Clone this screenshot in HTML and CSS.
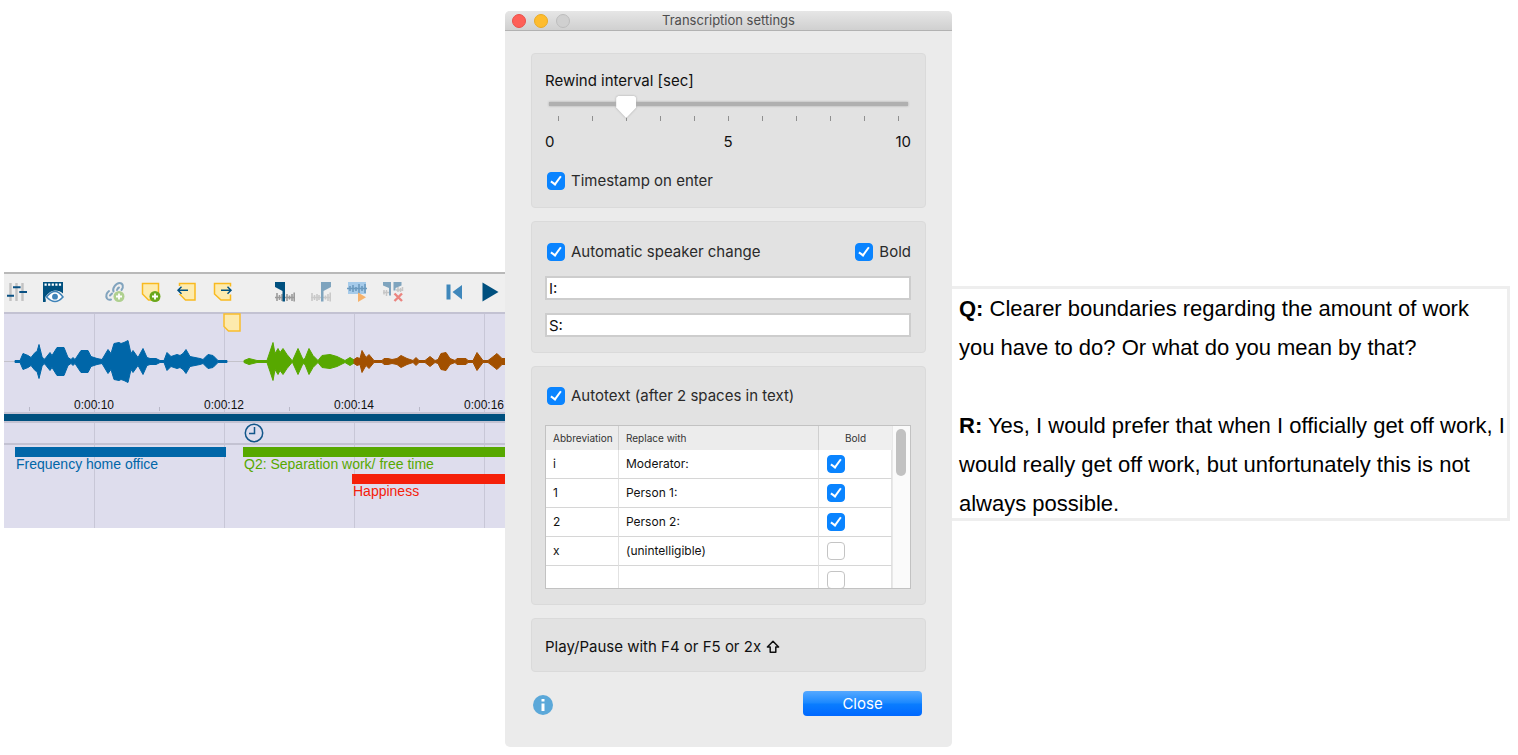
FILE: index.html
```html
<!DOCTYPE html>
<html lang="en">
<head>
  <meta charset="utf-8">
  <title>Transcription settings</title>
  <link rel="stylesheet" href="styles.css">
</head>
<body>
<main class="page">

  <!-- MEDIA PLAYER -->
  <section class="player">
    <div class="toolbar">
      <div class="tool-group">
        <button class="tool" aria-label="Levels"><svg viewBox="0 0 20 20"><path d="M3.5 1v18M9.5 1v18M15.5 1v18" stroke="#c3c3c3" stroke-width="2.4"/><path d="M0 13.7h7M6 5.3h7.6M12.3 10h7.7" stroke="#0a5184" stroke-width="2"/></svg></button>
        <button class="tool" aria-label="Show video"><svg viewBox="0 0 20 20"><path d="M0 0h20v20H0z" fill="#00507f"/><path d="M1.5 2.6h17.4" stroke="#fff" stroke-width="2.4" stroke-dasharray="2.2 1.4"/><path d="M2.6 20C3.500 17 1.500 16 2.600 14.500Q7 8.500 12 8.500Q17 8.500 20 11.500V20z" fill="#efefef"/><path d="M3.500 15Q8 9.500 12 9.500T20 15Q16 19.500 12 19.500T3.500 15z" fill="#fff" stroke="#3f83b8" stroke-width="1.500"/><circle cx="12" cy="14.700" r="2.900" fill="#3f83b8"/></svg></button>
      </div>
      <div class="tool-group">
        <button class="tool" aria-label="Add link"><svg viewBox="0 0 20 20"><g fill="none" stroke="#82a4be" stroke-width="2" stroke-linecap="round"><path d="M8.500 9.500C7 6.500 11 1 14.500 1S19 5 16.500 8"/><path d="M12 8Q12.700 6 14 5.500M4 9C1.500 11 .500 13.500 2 16.500Q3.500 18.500 6 17.500M7 11.500l-2 2"/></g><circle cx="14" cy="14.500" r="5.500" fill="#afd08f"/><path d="M14 11.500v6M11 14.500h6" stroke="#fff" stroke-width="1.800"/></svg></button>
        <button class="tool" aria-label="Add memo"><svg viewBox="0 0 20 20"><path d="M1.500 1.500h16V18H7.500l-6-6z" fill="#fdebaf" stroke="#f9ba20" stroke-width="1.500"/><circle cx="14" cy="14.500" r="5.500" fill="#6aa71b"/><path d="M14 11.500v6M11 14.500h6" stroke="#fff" stroke-width="1.800"/></svg></button>
        <button class="tool" aria-label="Previous memo"><svg viewBox="0 0 20 20"><path d="M2.500 1.500h15.500V18H8.500l-6-6z" fill="#fdebaf" stroke="#f9ba20" stroke-width="1.500"/><path d="M0 4h4v8H0z" fill="#efefef"/><path d="M11 8.300H1M4.500 4.800L1 8.300l3.500 3.500" fill="none" stroke="#00507f" stroke-width="1.500"/></svg></button>
        <button class="tool" aria-label="Next memo"><svg viewBox="0 0 20 20"><path d="M1.500 1.500h16V18H8l-6.500-6z" fill="#fdebaf" stroke="#f9ba20" stroke-width="1.500"/><path d="M16 4.500h3v8h-3z" fill="#efefef"/><path d="M8 8.300h10M14.500 4.800L18 8.300l-3.500 3.500" fill="none" stroke="#00507f" stroke-width="1.500"/></svg></button>
      </div>
      <div class="tool-group">
        <button class="tool" aria-label="Clip start"><svg viewBox="0 0 20 20"><path d="M0 15.500h20M2 11v8M4.500 13v5M7 12v7M12 12v7M14.500 13.500v4M17 12v7M19.200 10.500v9" stroke="#9b9b9b" stroke-width="1.600"/><path d="M0 0h10v19.500H7.500V9L0 5z" fill="#00507f"/></svg></button>
        <button class="tool" aria-label="Clip end"><svg viewBox="0 0 20 20"><path d="M0 15.500h20M1 11v8M3.500 13v5M6 12v7M8 13v5M14.500 13.500v4M17 12v7M19.200 10.500v9" stroke="#c9c9c9" stroke-width="1.600"/><path d="M20 0H10v19.500h2.500V9L20 5z" fill="#7fa4be"/></svg></button>
        <button class="tool" aria-label="Play clip"><svg viewBox="0 0 20 20"><path d="M1 0h18v12H1z" fill="#a6cbea"/><path d="M0 6.500h20M3 4v5M6 3v7M9 5v4M12 2v9M15 4v5M18 2v9" stroke="#6b9abf" stroke-width="1.600"/><path d="M11 10.500l8 4.800-8 4.700z" fill="#f6b26b"/></svg></button>
        <button class="tool" aria-label="Delete clip"><svg viewBox="0 0 20 20"><path d="M1 8v4.500M3.500 8v6M0 10.500h7M13 8h7M15 5v5M17.500 6v4M19.500 5v4" stroke="#c6c6c6" stroke-width="1.500"/><path d="M0 0h8v13.500H6V6L0 3.500zM18.500 0H10.500v8.500h2V6l6-2.500z" fill="#7fa4be"/><path d="M11.500 11.500l7.500 7.500M19 11.500L11.500 19" stroke="#eb8580" stroke-width="2.400"/></svg></button>
      </div>
      <div class="tool-group">
        <button class="tool" aria-label="To start"><svg viewBox="0 0 20 20"><path d="M1.500 2.500h4v15h-4zM17 3v14.500L7.500 10z" fill="#3f87bb"/></svg></button>
        <button class="tool" aria-label="Play"><svg viewBox="0 0 20 20"><path d="M1.500 .500V19.500L17.500 10z" fill="#00507f"/></svg></button>
      </div>
    </div>

    <div class="timeline">
      <div class="wave">
        <svg id="waveView" class="wave-view" width="501" height="84" viewBox="4 314 501 84"></svg>
        <svg class="memo-pin" width="18" height="19" viewBox="0 0 18 19"><path d="M1 1h16v17H5.500L1 13.500z" fill="#fdeaad" stroke="#f9bd2c" stroke-width="1.500"/></svg>
        <div class="times">
          <span>0:00:10</span><span>0:00:12</span><span>0:00:14</span><span>0:00:16</span>
        </div>
      </div>
      <div class="divider"></div>
      <div class="stamps">
        <svg class="stamp" width="20" height="20" viewBox="0 0 20 20"><circle cx="10" cy="10" r="8.700" fill="none" stroke="#12568a" stroke-width="1.500"/><path d="M10.500 4v6.500H5" fill="none" stroke="#12568a" stroke-width="1.500"/></svg>
      </div>
      <div class="codings">
        <div class="coding coding-office">Frequency home office</div>
        <div class="coding coding-time">Q2: Separation work/ free time</div>
        <div class="coding coding-happy">Happiness</div>
      </div>
    </div>
  </section>

  <!-- SETTINGS DIALOG -->
  <section class="dialog">
    <header class="titlebar">
      <div class="lights"><i class="light red"></i><i class="light yellow"></i><i class="light"></i></div>
      <h1 class="title">Transcription settings</h1>
    </header>

    <div class="dialog-body">
      <div class="panel panel-rewind">
        <label class="caption" for="rewind">Rewind interval [sec]</label>
        <input class="slider" id="rewind" type="range" min="0" max="10" value="2">
        <div class="ticks"><i></i><i></i><i></i><i></i><i></i><i></i><i></i><i></i><i></i><i></i><i></i></div>
        <div class="scale"><span>0</span><span>5</span><span>10</span></div>
        <label class="check"><input type="checkbox" checked>Timestamp on enter</label>
      </div>

      <div class="panel panel-speaker">
        <div class="check-row">
          <label class="check"><input type="checkbox" checked>Automatic speaker change</label>
          <label class="check"><input type="checkbox" checked>Bold</label>
        </div>
        <input class="field" type="text" value="I:" aria-label="First speaker">
        <input class="field" type="text" value="S:" aria-label="Second speaker">
      </div>

      <div class="panel panel-autotext">
        <label class="check"><input type="checkbox" checked>Autotext (after 2 spaces in text)</label>
        <div class="table-box">
          <table class="autotext">
            <thead>
              <tr><th class="col-abbr">Abbreviation</th><th>Replace with</th><th class="col-bold">Bold</th></tr>
            </thead>
            <tbody>
              <tr><td>i</td><td>Moderator:</td><td><input type="checkbox" aria-label="Bold" checked></td></tr>
              <tr><td>1</td><td>Person 1:</td><td><input type="checkbox" aria-label="Bold" checked></td></tr>
              <tr><td>2</td><td>Person 2:</td><td><input type="checkbox" aria-label="Bold" checked></td></tr>
              <tr><td>x</td><td>(unintelligible)</td><td><input type="checkbox" aria-label="Bold"></td></tr>
              <tr><td></td><td></td><td><input type="checkbox" aria-label="Bold"></td></tr>
            </tbody>
          </table>
          <div class="scrollbar"><div class="scroll-thumb"></div></div>
        </div>
      </div>

      <div class="panel panel-keys">
        <span>Play/Pause with F4 or F5 or 2x</span>
        <svg width="14" height="14" viewBox="0 0 14 14"><path d="M7 1.200L12.600 7H9.800v5.200H4.200V7H1.400z" fill="none" stroke="#111" stroke-width="1.500" stroke-linejoin="round"/></svg>
      </div>

      <footer class="actions">
        <button class="info" aria-label="Help"><svg width="20" height="20" viewBox="0 0 20 20"><circle cx="10" cy="10" r="10" fill="#5ba8d9"/><path d="M8.500 4h3v2.600h-3zM8.500 8.500h3V16h-3z" fill="#fff"/></svg></button>
        <button class="close">Close</button>
      </footer>
    </div>
  </section>

  <!-- TRANSCRIPT -->
  <section class="transcript">
    <p><b>Q:</b> Clearer boundaries regarding the amount of work you have to do? Or what do you mean by that?</p>
    <p><b>R:</b> Yes, I would prefer that when I officially get off work, I would really get off work, but unfortunately this is not always possible.</p>
  </section>
</main>

<script>
(function(){
  // [x, amplitude] pairs, mirrored around the middle line
  const mid=361.5;
  const segments=[
    {color:'#0066a8',pts:[[15,1],[20,1],[23,8],[28,6],[31,4],[35,9],[37,10],[39,17],[42,5],[44,2],[46,4],[50,9],[52,6],[57,14],[64,14],[68,4],[71,2],[73,4],[75,2],[81,11],[88,11],[91,5],[97,3],[102,2],[108,12],[111,8],[114,18],[119,19],[121,18],[124,19],[128,21],[131,8],[133,11],[138,4],[143,13],[147,4],[150,3],[156,3],[160,1],[164,1],[167,9],[171,5],[177,7],[180,6],[183,8],[186,12],[190,5],[200,3],[203,2],[208,7],[213,6],[218,1],[227,1]]},
    {color:'#57a800',pts:[[244,1],[249,3],[257,1],[267,1],[270,10],[273,19],[275,8],[278,13],[280,9],[283,13],[287,7],[292,1],[293,2],[298,13],[303,2],[305,3],[309,13],[313,6],[318,1],[322,6],[330,7],[337,5],[345,1],[350,4],[355,1]]},
    {color:'#a25000',pts:[[354,2],[357,4],[360,3],[362,11],[366,4],[369,7],[374,1],[382,1],[384,3],[388,3],[392,2],[397,3],[401,6],[407,3],[413,1],[416,4],[419,1],[425,1],[430,5],[435,1],[438,2],[441,8],[446,9],[450,3],[455,1],[457,3],[466,3],[468,1],[473,1],[477,9],[483,1],[488,1],[492,4],[497,8],[502,3],[505,3]]}
  ];
  const top=p=>`${p[0]},${mid-p[1]}`, bottom=p=>`${p[0]},${mid+p[1]}`;
  document.getElementById('waveView').innerHTML=
    `<path d="M4 ${mid}H505" stroke="#c3c2ca"/>`+
    segments.map(s=>`<polygon fill="${s.color}" stroke="${s.color}" stroke-linejoin="round" points="${[...s.pts.map(top),...s.pts.slice().reverse().map(bottom)].join(' ')}"/>`).join('');
})();
</script>
</body>
</html>
```
FILE: styles.css
```css
/* --- Layout & Basics --- */
*{box-sizing:border-box}
body{margin:0;background:#fff;font-family:Inter,"Liberation Sans",sans-serif;font-size:15px;line-height:20px;color:#111}
button,input{font:inherit;margin:0}
button{border:0;padding:0;background:none}
.page{display:grid;grid-template-columns:minmax(0,501fr) 447px minmax(0,558fr);align-items:start;padding:11px 8px 8px 4px}

/* --- Player --- */
.player{margin-top:261px;font-family:"Liberation Sans",Arial,sans-serif;overflow:hidden}
.toolbar{display:flex;gap:42px;height:42px;padding:8px 3px 0;background:#efefef;border-top:2px solid #b9b9b9;border-bottom:2px solid #c3c2d2}
.tool-group{display:flex;gap:16px}
.tool{width:20px;height:20px}
.tool svg{display:block;width:20px;height:20px;overflow:visible}
.timeline{background:#dedded linear-gradient(90deg,#c8c7d7 1px,transparent 1px) 90px 0/130px 100%}
.wave{position:relative;height:98px}
.wave-view{display:block}
.memo-pin{position:absolute;left:219px;top:-1px}
.times{display:flex;padding-left:25px;height:14px;font-size:12px;line-height:14px;background:repeating-linear-gradient(90deg,#b9b8c8 0 1px,transparent 1px 130px) 25px 9px/100% 4px no-repeat}
.times span{flex:0 0 130px;text-align:center}
.divider{height:11px;background:#00507f;border-top:2px solid #c5c4d4;border-bottom:2px solid #c3c2d2}
.stamps{height:22px;padding-left:240px;border-bottom:2px solid #c3c2d2}
.stamp{display:block}
.codings{display:grid;grid-template-columns:11px 211px 17px 109px 1fr;grid-auto-rows:27px;height:83px;padding-top:2px;font-size:14px;line-height:15px;white-space:nowrap}
.coding{border-top:10px solid;padding-left:1px}
.coding-office{grid-area:1/2;color:#0066a8}
.coding-time{grid-area:1/4/2/6;color:#57a800}
.coding-happy{grid-area:2/5;color:#f5200a}

/* --- Dialog --- */
.dialog{background:#ebebeb;border-radius:5px;overflow:hidden}
.titlebar{display:grid;grid-template-columns:1fr auto 1fr;align-items:center;height:20px;padding:0 7px;background:linear-gradient(#e6e6e6,#d0d0d0);border-bottom:1px solid #b2b2b2}
.lights{display:flex;gap:8px}
.light{width:14px;height:14px;border-radius:50%;background:#d0d0d0;border:1px solid #bdbdbd}
.red{background:#fe5f57;border-color:#ea5049}
.yellow{background:#febc2e;border-color:#eaab23}
.title{margin:0;font-size:13px;font-weight:400;line-height:19px;color:#4d4d4d}
.dialog-body{display:flex;flex-direction:column;gap:13px;padding:22px 26px 31px}
.panel{padding:14px 14px 14px 13px;background:#e2e2e2;border:1px solid #dadada;border-radius:4px}

/* --- Checkboxes --- */
.check{display:flex;align-items:center;gap:6px;padding-left:2px;color:#2a2a2a}
input[type=checkbox]{appearance:none;display:block;position:relative;width:18px;height:18px;border:1px solid #c4c4c4;border-radius:4px;background:#fff}
input[type=checkbox]:checked{background:#0a84ff;border-color:#0a84ff}
input[type=checkbox]:checked::before{content:"";position:absolute;left:5px;top:1px;width:4px;height:9px;border:solid #fff;border-width:0 2px 2px 0;transform:rotate(36deg)}

/* --- Rewind --- */
.panel-rewind{height:155px;padding-top:17px}
.caption{display:block}
.slider{appearance:none;display:block;width:361px;height:22px;margin:5px 2px 0 3px;background:linear-gradient(#b0b0b0,#b0b0b0) center 6px/359px 4px no-repeat;filter:drop-shadow(0 0 1px rgba(0,0,0,.25))}
.slider::-webkit-slider-thumb{appearance:none;width:20px;height:22px;background:#fff;clip-path:polygon(10% 0,90% 0,100% 8%,100% 52%,50% 100%,0 52%,0 8%)}
.ticks{display:flex;justify-content:space-between;margin:-2px 12px 0 13px}
.ticks i{width:1px;height:5px;background:#8f8f8f}
.scale{display:grid;grid-template-columns:repeat(3,1fr);margin-top:11px}
.scale span:nth-child(2){text-align:center}
.scale span:nth-child(3){text-align:right}
.panel-rewind .check{margin-top:19px}

/* --- Speaker change --- */
.panel-speaker{display:flex;flex-direction:column;gap:13px;height:132px;padding-top:20px}
.check-row{display:flex;justify-content:space-between;margin-bottom:1px}
.field{width:100%;height:24px;padding:0 2px;border:2px solid #cdcdcd;border-radius:0;background:#fff;color:#111}

/* --- Autotext --- */
.panel-autotext{height:239px;padding-top:19px}
.table-box{display:grid;grid-template-columns:1fr 18px;height:164px;margin-top:19px;overflow:hidden;border:1px solid #c2c2c2;background:#fff}
.autotext{width:100%;table-layout:fixed;border-collapse:separate;border-spacing:0;align-self:start;font-size:12px;line-height:16px}
.autotext th{height:24px;padding:0 7px;background:#ececec;border-right:1px solid #cfcfcf;font-size:10px;font-weight:400;text-align:left;color:#333}
.autotext td{height:29px;padding:0 7px;border-right:1px solid #e2e2e2;border-bottom:1px solid #d6d6d6}
.autotext td:last-child{padding-left:8px}
.autotext .col-abbr{width:73px}
.autotext .col-bold{width:73px;text-align:center;border-right:0;background:#efefef}
.scrollbar{padding:3px;background:#fafafa;border-left:1px solid #e8e8e8}
.scroll-thumb{width:10px;height:47px;border-radius:5px;background:#c1c1c1}

/* --- Footer --- */
.panel-keys{display:flex;align-items:center;gap:5px;height:54px;padding-top:18px}
.actions{display:flex;justify-content:space-between;align-items:flex-start;margin-top:6px;padding:0 4px 0 2px}
.info{height:20px;margin-top:4px}
.info svg{display:block}
.close{width:119px;height:25px;border-radius:4px;background:linear-gradient(#56a9ff,#1a88ff 48%,#0a7dff 52%,#0068ff);color:#fff}

/* --- Transcript --- */
.transcript{margin-top:275px;padding:0 0 0 7px;border:3px solid #eee;border-left:0;font:22px/39px "Liberation Sans",Arial,sans-serif;color:#000}
.transcript p{margin:0 0 39px}
.transcript p:last-child{margin-bottom:-5px}
```
